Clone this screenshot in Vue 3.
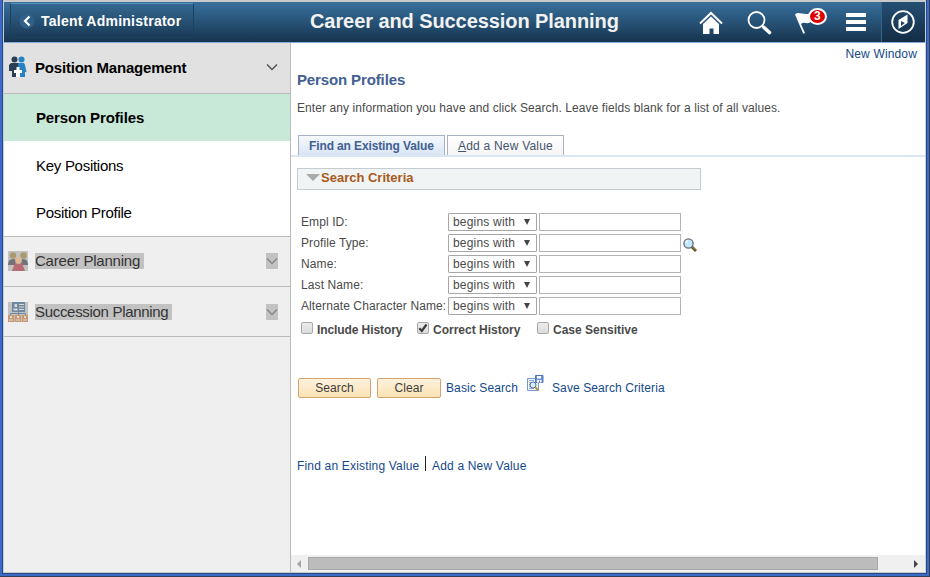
<template>
  <div class="window">
    <header class="topbar">
      <button class="back">
        <svg class="back-icon" width="16" height="16" viewBox="0 0 16 16">
          <circle cx="8" cy="8" r="7.5" fill="#2f6089" />
          <path d="M10.500 3.500 6 8l4.500 4.500" fill="none" stroke="#fff" stroke-width="2.200" />
        </svg>
        <span>Talent Administrator</span>
      </button>
      <h1>Career and Succession Planning</h1>
      <nav class="actions">
        <svg class="home" width="24" height="24" viewBox="0 0 24 24">
          <path d="M1 12.500 12 2 23 12.500" fill="none" stroke="#fff" stroke-width="2" />
          <path d="M12 5.500 20 13V23h-5.500v-5.500h-4V23H4V13z" fill="#fff" />
        </svg>
        <svg class="find" width="26" height="26" viewBox="0 0 26 26">
          <circle cx="9.500" cy="10" r="8" fill="none" stroke="#fff" stroke-width="1.800" />
          <path d="m15 15.500 2 2" stroke="#fff" stroke-width="2" />
          <path d="m17 17.500 5.500 5" stroke="#fff" stroke-width="3.600" stroke-linecap="round" />
        </svg>
        <div class="flag">
          <svg width="20" height="24" viewBox="0 0 20 24">
            <path d="M0 4.500c4-3.500 7 1 15-1v9c-4 2-6-1.500-9 1.500L10 23l-1.700.7z" fill="#fff" />
          </svg>
          <span class="badge">3</span>
        </div>
        <div class="menu"><i></i><i></i><i></i></div>
        <div class="compass">
          <svg width="24" height="24" viewBox="0 0 24 24">
            <circle cx="12" cy="12" r="10.800" fill="none" stroke="#fff" stroke-width="1.800" />
            <path d="M7.500 10 16.500 4.500V13L7.500 19z" fill="#fff" />
            <path d="m10 11 3.800 2L10 16z" fill="#1c3f5e" />
          </svg>
        </div>
      </nav>
    </header>

    <div class="body">
      <aside class="sidebar">
        <div class="group open">
          <svg class="group-icon" width="20" height="22" viewBox="0 0 20 22">
            <circle cx="6.500" cy="3.500" r="3" fill="#2c3e55" />
            <circle cx="13.500" cy="3.500" r="3" fill="#2582c4" />
            <path d="M3 7h7v14H4v-6H1V9z" fill="#2c3e55" />
            <path d="M10 7h6l1 2 1.500 7H17v5h-7z" fill="#2582c4" />
            <path d="M6 14h2.500v-3h3v3H14v3h-2v4H8v-4H6z" fill="#fff" />
          </svg>
          <span class="label">Position Management</span>
          <svg class="chevron" width="12" height="16" viewBox="0 0 12 16">
            <path d="m1 5.500 5 5 5-5" fill="none" stroke="#555" stroke-width="1.500" />
          </svg>
        </div>
        <ul>
          <li v-for="page in pages" :key="page" :class="{ current: page === currentPage }" @click="currentPage = page">
            <span>{{ page }}</span>
          </li>
        </ul>
        <div class="group disabled">
          <svg class="group-icon" width="20" height="20" viewBox="0 0 20 20">
            <path d="M0 0h20v20H0z" fill="#c2c2c2" />
            <path d="M0 14q0-6 5-6t5 5q0-5 5-5t5 6z" fill="#70747a" />
            <circle cx="5" cy="4.500" r="3.200" fill="#aa9971" />
            <circle cx="15.500" cy="4.500" r="3.200" fill="#aa9971" />
            <path d="M7 12h7l3 8H4z" fill="#b86b70" />
            <circle cx="10.500" cy="9.500" r="3.400" fill="#dbb797" />
          </svg>
          <span class="label career">Career Planning</span>
          <svg class="chevron" width="12" height="16" viewBox="0 0 12 16">
            <path d="m1 5.500 5 5 5-5" fill="none" stroke="#888" stroke-width="1.500" />
          </svg>
        </div>
        <div class="group disabled last">
          <svg class="group-icon" width="20" height="20" viewBox="0 0 20 20">
            <path d="M0 0h20v20H0z" fill="#c2c2c2" />
            <path d="M4 0h13v10H4z" fill="#70899f" />
            <path d="M5.500 6.500h4v2h-4zM6.500 2h2.500v3H6.500zM11 2h5v1h-5zM11 4.500h5v1h-5zM11 7h5v1h-5z" fill="#d8d8d8" />
            <path d="M10.500 10v3M2.500 13v-1.500h15V13" fill="none" stroke="#70899f" />
            <path d="M0 13h6v7H0zM7 13h6v7H7zM14 13h6v7h-6z" fill="#c9986f" />
            <path d="M2 14h2v2H2zM9 14h2v2H9zM16 14h2v2h-2zM1 17.500h4v1H1zM8 17.500h4v1H8zM15 17.500h4v1h-4z" fill="#dedbd8" />
          </svg>
          <span class="label">Succession Planning</span>
          <svg class="chevron" width="12" height="16" viewBox="0 0 12 16">
            <path d="m1 5.500 5 5 5-5" fill="none" stroke="#888" stroke-width="1.500" />
          </svg>
        </div>
      </aside>

      <main class="content">
        <div class="new-window"><a>New Window</a></div>
        <h2><span>Person Profiles</span></h2>
        <p class="hint"><span>Enter any information you have and click Search. Leave fields blank for a list of all values.</span></p>

        <div class="tabs">
          <div class="tab active"><span>Find an Existing Value</span></div>
          <div class="tab"><span><u>A</u>dd a New Value</span></div>
        </div>

        <div class="criteria">
          <i class="triangle"></i>
          <span>Search Criteria</span>
        </div>

        <form class="fields" @submit.prevent>
          <div v-for="field in fields" :key="field.label" class="row">
            <label>{{ field.label }}</label>
            <div class="select"><span>begins with</span><i></i></div>
            <input v-model="field.value" type="text">
            <svg v-if="field.lookup" class="lookup" width="14" height="14" viewBox="0 0 14 14">
              <path d="m8.500 8.500 4.500 4.500" stroke="#514920" stroke-width="2.600" />
              <path d="m9 8.500 4 4" stroke="#b5a642" stroke-width=".8" />
              <circle cx="5.500" cy="5.500" r="4.600" fill="#c4e8fb" stroke="#626c78" stroke-width="1.300" />
              <path d="M3 5q0-2 2-2.300" stroke="#fff" stroke-width="1.400" fill="none" />
            </svg>
          </div>
        </form>

        <div class="checks">
          <div v-for="check in checks" :key="check.label" class="check" @click="check.on = !check.on">
            <span class="box">
              <svg v-if="check.on" width="10" height="10" viewBox="0 0 10 10">
                <path d="m1.300 5.300 2.500 2.700L8.500 1.500" fill="none" stroke="#3c3c3c" stroke-width="2.200" />
              </svg>
            </span>
            <span class="text">{{ check.label }}</span>
          </div>
        </div>

        <div class="buttons">
          <button class="search"><span>Search</span></button>
          <button class="clear"><span>Clear</span></button>
          <a class="basic">Basic Search</a>
          <svg class="save-icon" width="17" height="17" viewBox="0 0 17 17">
            <path d="M.5 3.500h11v12H.5z" fill="#eef4fc" stroke="#7799d0" />
            <path d="M2 5.500h5M2 7.500h2M2 9.500h1M2 11.500h1M2 13.500h5" stroke="#8eaadb" />
            <path d="M8.500.5H16v7H8.500z" fill="#6d94d8" stroke="#4a76c2" />
            <path d="M10 1h4v2.500h-4zM10 5h4.500v2.500H10z" fill="#fff" />
            <path d="M12.500 5.500v2" stroke="#4a76c2" />
            <circle cx="6" cy="10" r="3" fill="#d5ecfb" stroke="#56718f" />
            <path d="m8.300 12.300 2.500 2.700" stroke="#b59530" stroke-width="2" />
          </svg>
          <a class="save">Save Search Criteria</a>
        </div>

        <div class="links">
          <a class="existing">Find an Existing Value</a>
          <i class="divider"></i>
          <a class="add">Add a New Value</a>
        </div>

        <div class="scrollbar">
          <i class="arrow left"></i>
          <div class="thumb"></div>
          <i class="arrow right"></i>
        </div>
      </main>
    </div>
  </div>
</template>

<script setup>
import { ref } from 'vue';

const pages = ['Person Profiles', 'Key Positions', 'Position Profile'];
const currentPage = ref('Person Profiles');

const fields = ref([
  { label: 'Empl ID:', value: '' },
  { label: 'Profile Type:', value: '', lookup: true },
  { label: 'Name:', value: '' },
  { label: 'Last Name:', value: '' },
  { label: 'Alternate Character Name:', value: '' }
]);

const checks = ref([
  { label: 'Include History', on: false },
  { label: 'Correct History', on: true },
  { label: 'Case Sensitive', on: false }
]);
</script>

<style>
body {
  margin: 0;
  overflow: hidden;
}
</style>

<style scoped>
* {
  box-sizing: border-box;
}
.window {
  display: flex;
  flex-direction: column;
  width: 930px;
  height: 577px;
  padding: 2px 5px 5px 4px;
  background:
    linear-gradient(#c9c9c9, #c9c9c9) 3px 0 / 923px 2px no-repeat,
    linear-gradient(#c9c9c9, #c9c9c9) 3px 572px / 923px 1px no-repeat,
    linear-gradient(#c9cfd9, #c9cfd9) 3px 0 / 1px 573px no-repeat,
    linear-gradient(#c9cfd9, #c9cfd9) 925px 0 / 1px 573px no-repeat,
    linear-gradient(#27498a, #27498a) 2px 0 / 1px 574px no-repeat,
    linear-gradient(#27498a, #27498a) 926px 0 / 1px 574px no-repeat,
    linear-gradient(#27498a, #27498a) 2px 573px / 925px 1px no-repeat,
    linear-gradient(#343f55, #343f55) 0 576px / 930px 1px no-repeat,
    linear-gradient(#343f55, #343f55) 929px 0 / 1px 577px no-repeat,
    #3b6bc6;
  font-family: "Liberation Sans", Arial, sans-serif;
  font-size: 12px;
  letter-spacing: 0.1px;
  color: #4a4a4a;
  white-space: nowrap;
}
svg {
  display: block;
  flex: none;
}
button {
  font-family: inherit;
  letter-spacing: inherit;
  padding: 0;
}
a {
  color: #14498c;
}

/* header */
.topbar {
  display: flex;
  flex: none;
  height: 41px;
  border-bottom: 1px solid #83aedc;
  background: linear-gradient(#39709c, #2a587e 40%, #17344f);
}
.back {
  display: flex;
  align-items: center;
  width: 184px;
  height: 35px;
  margin: 1px 0 0 6px;
  padding: 0 0 0 8px;
  border: 1px solid #1b4060;
  border-top-color: #5293bd;
  border-radius: 2px;
  background: linear-gradient(#346890, #1b3b58);
  color: #fff;
  font-size: 14px;
  font-weight: bold;
  letter-spacing: 0.25px;
}
.back-icon {
  margin-right: 6px;
}
h1 {
  width: 310px;
  margin: 0 0 0 116px;
  color: #f2f2f2;
  font-size: 20px;
  letter-spacing: -0.08px;
  line-height: 38px;
}
.actions {
  display: flex;
  flex: 1;
}
.home {
  margin: 9px 0 0 79px;
}
.find {
  margin: 8px 0 0 24px;
}
.flag {
  position: relative;
  margin: 8px 0 0 22px;
}
.badge {
  position: absolute;
  left: 13px;
  top: -2px;
  width: 19px;
  height: 17px;
  border: 2px solid #fff;
  border-radius: 50%;
  background: #e00000;
  color: #fff;
  font-size: 12px;
  font-weight: bold;
  line-height: 13px;
  text-align: center;
}
.menu {
  display: flex;
  flex-direction: column;
  gap: 3px;
  margin: 11px 0 0 31px;
}
.menu i {
  width: 20px;
  height: 4px;
  background: #fff;
}
.compass {
  width: 44px;
  margin-left: auto;
  padding: 8px 0 0 9px;
  border-left: 1px solid #3b6385;
  background: linear-gradient(#244f73, #132d45);
}

/* sidebar */
.body {
  display: flex;
  flex: 1;
  background: #fff;
}
.sidebar {
  width: 287px;
  height: 529px;
  border-right: 1px solid #bbb;
  background: #efefef;
}
.group {
  display: flex;
  align-items: center;
  height: 50px;
  padding: 0 12px 2px 4px;
  border-bottom: 1px solid #bbb;
  font-size: 15px;
  letter-spacing: -0.31px;
  color: #333;
}
.group.open {
  height: 51px;
  background: #e1e1e1;
  color: #000;
  font-weight: bold;
  letter-spacing: -0.2px;
}
.label {
  margin-left: 7px;
}
.label.career {
  letter-spacing: -0.22px;
}
.chevron {
  margin-left: auto;
}
.disabled .label {
  height: 16px;
  padding-right: 4px;
  line-height: 16px;
  background: #c2c2c2;
}
.disabled .chevron {
  background: #c2c2c2;
}
.group.last {
  padding-top: 2px;
  padding-bottom: 1px;
}
ul {
  height: 143px;
  margin: 0;
  padding: 0;
  border-bottom: 1px solid #bbb;
  background: #fff;
  list-style: none;
}
li {
  height: 47px;
  padding: 1px 0 0 32px;
  color: #000;
  font-size: 15px;
  letter-spacing: -0.28px;
  line-height: 47px;
}
.current {
  padding-top: 0;
  line-height: 48px;
  background: #c8e9d8;
  font-weight: bold;
  letter-spacing: -0.13px;
}

/* page */
.content {
  display: flex;
  flex: 1;
  flex-direction: column;
  height: 529px;
}
.new-window {
  height: 23px;
  padding-right: 8px;
  line-height: 23px;
  letter-spacing: 0.15px;
  text-align: right;
}
h2 {
  height: 28px;
  margin: 0 0 0 6px;
  color: #426092;
  font-size: 15px;
  letter-spacing: -0.13px;
  line-height: 28px;
}
.hint {
  height: 41px;
  margin: 0 0 0 6px;
  letter-spacing: 0.085px;
  line-height: 28px;
}
.tabs {
  display: flex;
  gap: 2px;
  height: 22px;
  padding-left: 7px;
  border-bottom: 2px solid #dbe6f5;
}
.tab {
  width: 117px;
  height: 20px;
  padding-left: 10px;
  border: 1px solid #a9b0c4;
  border-bottom: 0;
  background: linear-gradient(#fff, #f5f5f5);
  color: #44546e;
  letter-spacing: 0.21px;
  line-height: 20px;
}
.tab.active {
  width: 147px;
  background: linear-gradient(#f5f9fd, #d9e5f4);
  color: #426092;
  font-weight: bold;
  letter-spacing: -0.12px;
}
.criteria {
  display: flex;
  width: 404px;
  height: 22px;
  margin: 11px 0 0 6px;
  padding-left: 9px;
  border: 1px solid #c5cdd2;
  background: #f0f4f5;
  color: #a85a1c;
  font-size: 13px;
  font-weight: bold;
  letter-spacing: 0;
  line-height: 18px;
}
.triangle {
  height: 7px;
  margin: 5px 1px 0 -1px;
  border: 7px solid transparent;
  border-top-color: #aaa;
  border-bottom: 0;
}
.fields {
  display: flex;
  flex-direction: column;
  gap: 3px;
  margin: 23px 0 0 10px;
}
.row {
  display: flex;
  height: 18px;
  line-height: 18px;
}
.row label {
  width: 147px;
}
.select {
  display: flex;
  width: 89px;
  padding-left: 4px;
  border: 1px solid #a6a6a6;
  border-radius: 1px;
  letter-spacing: 0.2px;
  line-height: 16px;
}
.select i {
  height: 6px;
  margin: 5px 6px 0 auto;
  border: 3.5px solid transparent;
  border-top: 6px solid #444;
  border-bottom: 0;
}
input {
  width: 142px;
  height: 18px;
  margin: 0 0 0 2px;
  padding: 0 3px;
  border: 1px solid #b4b4b4;
  outline: 0;
}
.lookup {
  margin: 4px 0 0 2px;
}
.checks {
  display: flex;
  height: 20px;
  margin: 7px 0 0 10px;
  letter-spacing: 0;
}
.check {
  display: flex;
  width: 116px;
  font-weight: bold;
}
.check:nth-child(2) {
  width: 120px;
}
.box {
  width: 12px;
  height: 12px;
  margin-right: 4px;
  border: 1px solid #a8a8a8;
  border-radius: 2px;
  background: linear-gradient(#ececec, #dcdcdc);
}
.text {
  line-height: 17px;
}
.check:first-child .text {
  letter-spacing: -0.09px;
}
.buttons {
  display: flex;
  height: 24px;
  margin: 32px 0 0 7px;
  line-height: 28px;
}
.buttons button {
  height: 20px;
  margin: 4px 6px 0 0;
  border: 1px solid #d5a36d;
  border-radius: 2px;
  background: linear-gradient(#fef2dd, #fbe2b5);
  color: #3c3c3c;
  font-size: 12px;
  line-height: 18px;
}
.buttons .search {
  width: 73px;
}
.buttons .clear {
  width: 64px;
  margin-right: 5px;
}
.basic {
  width: 81px;
}
.save-icon {
  margin: 1px 8px 0 0;
}
.links {
  display: flex;
  height: 18px;
  margin: 58px 0 0 6px;
  letter-spacing: 0.18px;
  line-height: 20px;
}
.existing {
  width: 128px;
}
.divider {
  width: 1px;
  height: 15px;
  margin: 0 6px 0 0;
  background: #222;
}

/* scrollbar */
.scrollbar {
  display: flex;
  height: 17px;
  margin-top: auto;
  background: #f0f0f0;
}
.arrow {
  height: 8px;
  margin-top: 5px;
  border: 4px solid transparent;
}
.left {
  width: 4px;
  margin-left: 6px;
  border-left: 0;
  border-right-color: #a3a3a3;
}
.thumb {
  width: 570px;
  height: 13px;
  margin: 2px 0 0 7px;
  border: 1px solid #a8a8a8;
  background: #bcbcbc;
}
.right {
  margin-left: 36px;
  border-right: 0;
  border-left-color: #444;
}
</style>
